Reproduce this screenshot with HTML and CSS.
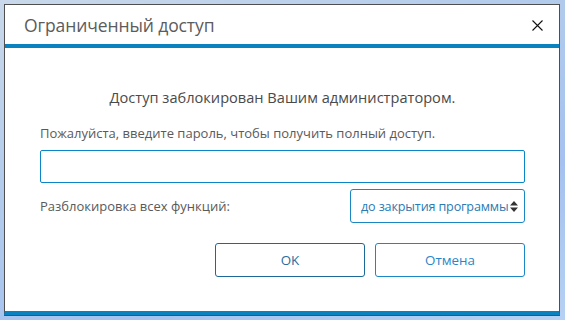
FILE: index.html
```html
<!DOCTYPE html>
<html lang="ru">
<head>
  <meta charset="UTF-8" />
  <title>Ограниченный доступ</title>
  <link rel="stylesheet" href="styles.css">
</head>
<body>
  <div class="dialog">
    <div class="titlebar">
      <div class="title">Ограниченный доступ</div>
      <button class="close" aria-label="Закрыть">
        <svg width="11" height="11" viewBox="0 0 11 11">
          <path d="M0.5 0.5 L10.5 10.5 M10.5 0.5 L0.5 10.5" stroke="#111" stroke-width="1.1" fill="none" />
        </svg>
      </button>
    </div>
    <div class="content">
      <div class="headline">Доступ заблокирован Вашим администратором.</div>
      <div class="hint">Пожалуйста, введите пароль, чтобы получить полный доступ.</div>
      <input type="password" class="password" />
      <div class="row">
        <div class="row-label">Разблокировка всех функций:</div>
        <div class="select">
          <span class="select-value">до закрытия программы</span>
          <svg class="arrows" width="8" height="11" viewBox="0 0 8 11">
            <path d="M0 4.5 L4 0 L8 4.5 Z M0 6.5 L4 11 L8 6.5 Z" fill="#333" />
          </svg>
        </div>
      </div>
      <div class="buttons">
        <button class="btn btn-ok">OK</button>
        <button class="btn">Отмена</button>
      </div>
    </div>
  </div>
</body>
</html>
```

FILE: styles.css
```css
html, body {
  height: 100%;
}
body {
  margin: 0;
  padding: 4px 5px 4px 4px;
  box-sizing: border-box;
  font-family: "Open Sans", "Noto Sans", sans-serif;
  background: linear-gradient(160deg, #c9d8ea 0%, #b3ccec 35%, #a5c1ef 70%, #b6d1f3 100%);
}
.dialog {
  height: 311px;
  box-sizing: border-box;
  border: 1px solid #4f4f4f;
  border-bottom: 4px solid #0a82c0;
  box-shadow: 0 1px 0 #4f4f4f;
  background: #fff;
  display: flex;
  flex-direction: column;
}
.titlebar {
  height: 38px;
  border-bottom: 4px solid #0a82c0;
  display: flex;
  align-items: center;
  justify-content: space-between;
  padding: 1px 16px 0 19px;
}
.title {
  font-size: 17.5px;
  color: #5c5c5c;
  letter-spacing: -0.1px;
}
.close {
  border: none;
  background: none;
  padding: 0;
  width: 11px;
  height: 11px;
  display: flex;
}
.content {
  flex: 1;
  padding: 0 34px 0 35px;
  display: flex;
  flex-direction: column;
}
.headline {
  margin-top: 39px;
  line-height: 20px;
  font-size: 14.6px;
  color: #4a4a4a;
  text-align: center;
}
.hint {
  margin-top: 17px;
  line-height: 18px;
  font-size: 13px;
  color: #5a5a5a;
}
.password {
  margin: 8px 0 0;
  height: 33px;
  box-sizing: border-box;
  border: 1px solid #0a86c8;
  border-radius: 2px;
  outline: none;
  padding: 0 8px;
}
.row {
  margin-top: 6px;
  height: 34px;
  display: flex;
  align-items: center;
  justify-content: space-between;
}
.row-label {
  font-size: 13px;
  color: #5a5a5a;
}
.select {
  width: 175px;
  height: 34px;
  box-sizing: border-box;
  border: 1px solid #1a86c2;
  border-radius: 3px;
  display: flex;
  align-items: center;
  padding: 0 6px 0 10px;
  font-size: 12.6px;
  color: #2a7ab4;
  white-space: nowrap;
  overflow: hidden;
}
.select-value {
  flex: 1;
  letter-spacing: -0.15px;
}
.arrows {
  flex: none;
}
.buttons {
  margin-top: 20px;
  display: flex;
  justify-content: flex-end;
  gap: 10px;
}
.btn {
  width: 150px;
  height: 34px;
  border: 1px solid #1a88c6;
  border-radius: 3px;
  background: #fff;
  font-family: inherit;
  font-size: 13.4px;
  color: #2a86c8;
  cursor: pointer;
}
.btn-ok {
  border-color: #1c6898;
  color: #2a6c9c;
}
```
